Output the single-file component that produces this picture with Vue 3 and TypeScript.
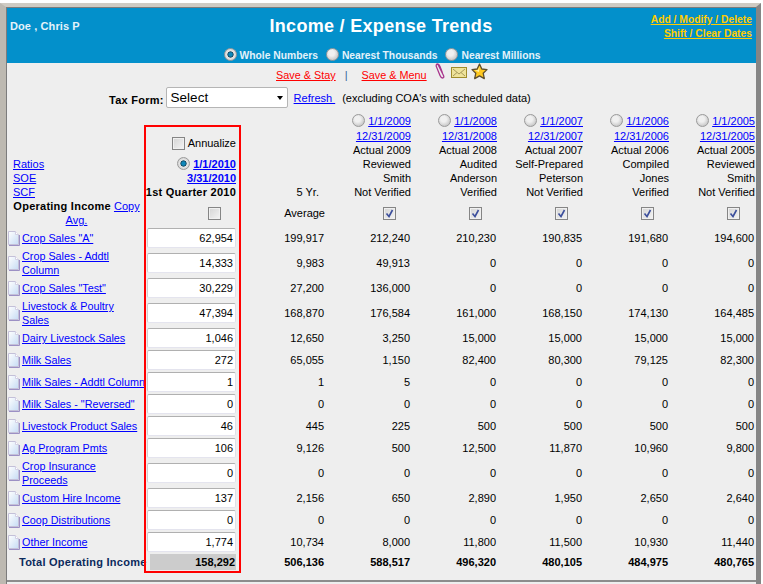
<script setup lang="ts">
interface Row {
  name: string[]
  q: string
  avg: string
  vals: string[]
}
const columns = [
  { from: '1/1/2009', to: '12/31/2009', lines: ['Actual 2009', 'Reviewed', 'Smith', 'Not Verified'] },
  { from: '1/1/2008', to: '12/31/2008', lines: ['Actual 2008', 'Audited', 'Anderson', 'Verified'] },
  { from: '1/1/2007', to: '12/31/2007', lines: ['Actual 2007', 'Self-Prepared', 'Peterson', 'Not Verified'] },
  { from: '1/1/2006', to: '12/31/2006', lines: ['Actual 2006', 'Compiled', 'Jones', 'Verified'] },
  { from: '1/1/2005', to: '12/31/2005', lines: ['Actual 2005', 'Reviewed', 'Smith', 'Not Verified'] },
]
const rows: Row[] = [
  { name: ['Crop Sales "A"'], q: '62,954', avg: '199,917', vals: ['212,240', '210,230', '190,835', '191,680', '194,600'] },
  { name: ['Crop Sales - Addtl', 'Column'], q: '14,333', avg: '9,983', vals: ['49,913', '0', '0', '0', '0'] },
  { name: ['Crop Sales "Test"'], q: '30,229', avg: '27,200', vals: ['136,000', '0', '0', '0', '0'] },
  { name: ['Livestock & Poultry', 'Sales'], q: '47,394', avg: '168,870', vals: ['176,584', '161,000', '168,150', '174,130', '164,485'] },
  { name: ['Dairy Livestock Sales'], q: '1,046', avg: '12,650', vals: ['3,250', '15,000', '15,000', '15,000', '15,000'] },
  { name: ['Milk Sales'], q: '272', avg: '65,055', vals: ['1,150', '82,400', '80,300', '79,125', '82,300'] },
  { name: ['Milk Sales - Addtl Column'], q: '1', avg: '1', vals: ['5', '0', '0', '0', '0'] },
  { name: ['Milk Sales - "Reversed"'], q: '0', avg: '0', vals: ['0', '0', '0', '0', '0'] },
  { name: ['Livestock Product Sales'], q: '46', avg: '445', vals: ['225', '500', '500', '500', '500'] },
  { name: ['Ag Program Pmts'], q: '106', avg: '9,126', vals: ['500', '12,500', '11,870', '10,960', '9,800'] },
  { name: ['Crop Insurance', 'Proceeds'], q: '0', avg: '0', vals: ['0', '0', '0', '0', '0'] },
  { name: ['Custom Hire Income'], q: '137', avg: '2,156', vals: ['650', '2,890', '1,950', '2,650', '2,640'] },
  { name: ['Coop Distributions'], q: '0', avg: '0', vals: ['0', '0', '0', '0', '0'] },
  { name: ['Other Income'], q: '1,774', avg: '10,734', vals: ['8,000', '11,800', '11,500', '10,930', '11,440'] },
]
const totals = ['588,517', '496,320', '480,105', '484,975', '480,765']
const units = [
  { label: 'Whole Numbers', on: true },
  { label: 'Nearest Thousands', on: false },
  { label: 'Nearest Millions', on: false },
]
</script>

<template>
  <div class="frame">
    <div class="inner">
      <header class="banner">
        <div class="banner-top">
          <div class="client">Doe , Chris P</div>
          <h1 class="title">Income / Expense Trends</h1>
          <div class="admin">
            <a>Add / Modify / Delete</a>
            <a>Shift / Clear Dates</a>
          </div>
        </div>
        <div class="units">
          <label v-for="u in units" :key="u.label" class="unit">
            <span class="radio" :class="{ on: u.on }"></span>{{ u.label }}
          </label>
        </div>
      </header>

      <div class="tools">
        <a class="save">Save &amp; Stay</a>
        <span class="pipe">|</span>
        <a class="save">Save &amp; Menu</a>
        <svg class="clip" width="11" height="16" viewBox="0 0 11 16">
          <path d="M3 1.5 L8.5 12.5 Q9.5 15 7.5 15 Q6 15 5 12.5 L1.2 3.2 Q1 1 2.5 1 Q4 1 5 3.5 L7.5 10" fill="none" stroke="#a8348c" stroke-width="1.3" />
        </svg>
        <svg class="mail" width="16" height="11" viewBox="0 0 16 11">
          <rect x="0.5" y="0.5" width="15" height="10" fill="#efe39a" stroke="#a08c2c" />
          <path d="M2 2 L8 7 L14 2 M2 9 L6 5.5 M14 9 L10 5.5" fill="none" stroke="#a89a5c" />
        </svg>
        <svg class="star" width="17" height="17" viewBox="0 0 17 17">
          <path d="M8.5 1 L10.8 6 L16 6.6 L12.2 10.2 L13.3 15.6 L8.5 12.9 L3.7 15.6 L4.8 10.2 L1 6.6 L6.2 6 Z" fill="#ffc81e" stroke="#5e4e2c" stroke-width="1.3" stroke-linejoin="round" />
          <path d="M8.5 3.5 L7 7 L4 7.4 L8 9 Z" fill="#fff2a8" />
        </svg>
      </div>

      <div class="taxform">
        <label class="tax-label">Tax Form:</label>
        <div class="select">Select<span class="caret"></span></div>
        <a class="link refresh">Refresh </a>
        <span class="note">(excluding COA's with scheduled data)</span>
      </div>

      <div class="grid">
        <!-- header, first band -->
        <div class="cell head-links">
          <a class="link">Ratios</a>
          <a class="link">SOE</a>
          <a class="link">SCF</a>
        </div>
        <div class="cell quarter quarter-head">
          <div class="annualize"><span class="check"></span>Annualize</div>
          <div class="line"><span class="radio on"></span><a class="link strong">1/1/2010</a></div>
          <div class="line"><a class="link strong">3/31/2010</a></div>
          <div class="line bold">1st Quarter 2010</div>
        </div>
        <div class="cell five">5 Yr.</div>
        <div v-for="c in columns" :key="c.from" class="cell period">
          <div class="line first"><span class="radio"></span><a class="link">{{ c.from }}</a></div>
          <div class="line"><a class="link">{{ c.to }}</a></div>
          <div v-for="(l, i) in c.lines" :key="i" class="line">{{ l }}</div>
        </div>

        <!-- header, second band -->
        <div class="cell op-income"><b class="bold">Operating Income</b> <a class="link">Copy</a><br /><a class="link">Avg.</a></div>
        <div class="cell quarter center-check"><span class="check"></span></div>
        <div class="cell avg-head">Average</div>
        <div v-for="c in columns" :key="c.to" class="cell col-check">
          <span class="check">
            <svg width="9" height="9" viewBox="0 0 9 9"><path d="M1.5 4.5 L4 7.5 L7.5 1" fill="none" stroke="#3c4f9c" stroke-width="1.6" /></svg>
          </span>
        </div>

        <!-- data -->
        <template v-for="r in rows" :key="r.name[0]">
          <div class="cell label" :class="{ tall: r.name.length > 1 }">
            <svg class="doc" width="12" height="15" viewBox="0 0 12 15">
              <defs>
                <linearGradient id="docfill" x1="0" y1="0" x2="1" y2="1">
                  <stop offset="0" stop-color="#ffffff" />
                  <stop offset="1" stop-color="#c6dcf4" />
                </linearGradient>
              </defs>
              <path d="M0.5 0.5 H7.5 L10.5 3.5 V13.5 H0.5 Z" fill="url(#docfill)" stroke="#c4c0d8" />
              <path d="M1 14.5 H11.5 V4" fill="none" stroke="#9c90c4" />
              <path d="M7.5 0.5 V3.5 H10.5" fill="#ffffff" stroke="#d4d0e4" />
            </svg>
            <a class="link">
              <template v-for="(n, i) in r.name" :key="i">{{ n }}<br v-if="i < r.name.length - 1" /></template>
            </a>
          </div>
          <div class="cell quarter entry"><div class="input">{{ r.q }}</div></div>
          <div class="cell num">{{ r.avg }}</div>
          <div v-for="(v, i) in r.vals" :key="i" class="cell num">{{ v }}</div>
        </template>

        <!-- totals -->
        <div class="cell total-label">Total Operating Income</div>
        <div class="cell quarter total-q"><div class="total-box">158,292</div></div>
        <div class="cell num total">506,136</div>
        <div v-for="(t, i) in totals" :key="i" class="cell num total">{{ t }}</div>
      </div>

      <div class="footer-rule"></div>
    </div>
  </div>
</template>

<style>
html, body { margin: 0; background: #fff; }
</style>

<style scoped>
.frame {
  box-sizing: border-box;
  width: 761px;
  height: 581px;
  margin-top: 3px;
  overflow: hidden;
  border-top: 4px solid #cfcbc3;
  border-left: 6px solid #bdb9b1;
  border-right: 5px solid #858585;
  background: #eeeeee;
  color: #000;
  font: 11px/14px "Liberation Sans", Arial, sans-serif;
}
.inner {
  box-sizing: border-box;
  height: 100%;
  border-top: 1px solid #7c7c7c;
  border-left: 1px solid #7c7c7c;
}
a { cursor: pointer; }
.link { color: #0000ff; text-decoration: underline; }
.bold { font-weight: 700; letter-spacing: 0.25px; }
.strong { font-weight: 700; }

.banner { height: 55px; background: #0390cb; color: #e4f2fa; font-weight: 700; }
.banner-top {
  display: grid;
  grid-template-columns: 1fr auto 1fr;
  height: 39px;
}
.client { padding: 11px 0 0 3px; font-size: 11px; letter-spacing: 0.1px; }
.title {
  margin: 0 1px 0 0;
  padding-top: 8px;
  color: #fff;
  font-size: 18px;
  line-height: 20px;
  letter-spacing: 0.3px;
}
.admin {
  display: flex;
  flex-direction: column;
  align-items: flex-end;
  padding: 5px 4px 0 0;
  font-size: 10.3px;
}
.admin a { text-decoration: underline; color: #ffcc00; }
.units {
  display: flex;
  justify-content: center;
  gap: 8px;
  padding-left: 1px;
  font-size: 10.3px;
  line-height: 17px;
}
.unit { display: flex; align-items: center; gap: 3px; }

.radio {
  display: inline-block;
  box-sizing: border-box;
  flex: none;
  width: 13px;
  height: 13px;
  margin-top: -3px;
  border-radius: 50%;
  border: 1px solid #9a9a9a;
  background: radial-gradient(circle at 42% 38%, #f0f0f0 0 30%, #c4c4c4 80%);
}
.radio.on {
  background: radial-gradient(circle, #1088ba 0 22%, #12465e 36%, #e8e8e8 44%, #c8c8c8 90%);
}

.check {
  display: inline-flex;
  align-items: center;
  justify-content: center;
  box-sizing: border-box;
  flex: none;
  width: 13px;
  height: 13px;
  border: 1px solid #858585;
  background: linear-gradient(135deg, #d4d4d4, #f4f4f4);
  box-shadow: inset 0 0 0 1px #f0f0f0;
}

.tools {
  display: flex;
  align-items: flex-end;
  box-sizing: border-box;
  height: 24px;
  padding: 0 0 5px 269px;
}
.save { color: #ff0000; text-decoration: underline; font-size: 10.85px; }
.pipe { margin: 0 14px 0 9px; color: #336699; }
.clip { margin: 0 0 3px 8px; }
.mail { margin: 0 0 4px 5px; }
.star { margin: 0 0 2px 4px; }

.taxform { display: flex; align-items: center; height: 21px; padding-left: 102px; }
.tax-label { font-weight: 700; letter-spacing: 0.25px; padding-top: 4px; margin-right: 2px; }
.select {
  position: relative;
  box-sizing: border-box;
  width: 122px;
  height: 21px;
  padding-left: 4px;
  background: #fff;
  border: 1px solid #b5b5b5;
  border-radius: 2px;
  font-size: 13.5px;
  line-height: 20px;
}
.caret {
  position: absolute;
  right: 4px;
  top: 8px;
  border: 3.5px solid transparent;
  border-top: 4px solid #000;
}
.refresh { margin-left: 6px; white-space: pre; }
.note { margin-left: 7px; }

.grid {
  display: grid;
  grid-template-columns: 137px 97px 84px repeat(5, 86px);
  margin-top: 6px;
}
.cell { min-width: 0; }

.head-links { display: flex; flex-direction: column; justify-content: flex-end; padding-left: 6px; align-items: flex-start; }
.quarter {
  box-sizing: border-box;
  border-left: 2px solid #ff0000;
  border-right: 2px solid #ff0000;
}
.quarter-head {
  display: flex;
  flex-direction: column;
  justify-content: flex-end;
  align-items: flex-end;
  margin-top: 11px;
  padding-right: 3px;
  border-top: 2px solid #ff0000;
}
.annualize { display: flex; align-items: center; gap: 3px; margin-bottom: 7px; }
.line { display: flex; justify-content: flex-end; align-items: center; gap: 3px; white-space: nowrap; height: 14px; }
.line.first { height: 15px; padding-bottom: 1px; box-sizing: border-box; }
.line .radio { margin-top: -1px; }
.five { display: flex; align-items: flex-end; justify-content: flex-end; padding-right: 6px; }

.op-income { height: 28px; text-align: center; padding-left: 2px; box-sizing: border-box; white-space: nowrap; }
.center-check { display: flex; align-items: center; justify-content: flex-end; padding-right: 18px; }
.avg-head { display: flex; align-items: center; justify-content: flex-end; }
.col-check { display: flex; align-items: center; justify-content: flex-end; padding-right: 15px; }

.label { display: flex; align-items: center; gap: 2px; height: 22px; padding-left: 1px; white-space: nowrap; font-size: 10.8px; }
.label.tall { height: 28px; }
.doc { flex: none; }
.entry { display: flex; align-items: center; padding-left: 1px; }
.input {
  box-sizing: border-box;
  width: 89px;
  height: 20px;
  padding-right: 2px;
  background: #fff;
  border-top: 1px solid #b0b0b0;
  border-left: 1px solid #cfcfcf;
  border-right: 1px solid #dfdfe8;
  border-bottom: 1px solid #e4e4ee;
  border-radius: 2px;
  text-align: right;
  line-height: 18px;
}
.num { display: flex; align-items: center; justify-content: flex-end; padding-right: 1px; }
.total { font-weight: 700; align-items: flex-start; padding-top: 2px; height: 20px; }
.total-label {
  height: 20px;
  padding: 2px 0 0 12px;
  box-sizing: border-box;
  color: #0b2a5c;
  font-weight: 700;
  letter-spacing: 0.25px;
  white-space: nowrap;
}
.total-q { height: 20px; border-bottom: 2px solid #ff0000; padding: 1px 3px 0 4px; }
.total-box {
  height: 16px;
  padding-right: 1px;
  background: #cccccc;
  font-weight: 700;
  text-align: right;
  line-height: 16px;
}
.footer-rule { margin-top: 5px; height: 2px; background: #8c8c8c; }
</style>
